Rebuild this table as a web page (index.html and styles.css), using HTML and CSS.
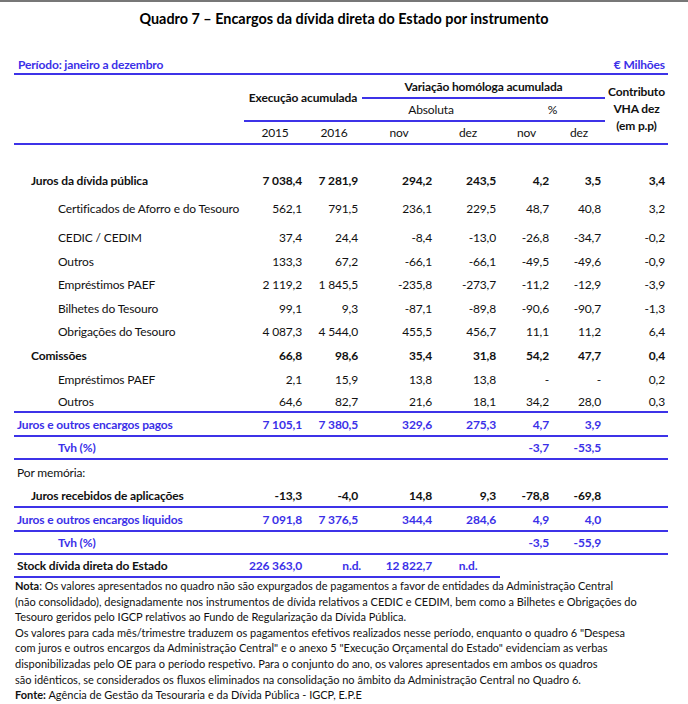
FILE: index.html
```html
<!DOCTYPE html>
<html lang="pt">
<head>
<meta charset="utf-8">
<title>Quadro 7</title>
<link rel="stylesheet" href="styles.css">
</head>
<body>
<div class="page">
  <div class="topline"></div>
  <h1 class="title">Quadro 7 – Encargos da dívida direta do Estado por instrumento</h1>

  <div class="period">
    <span>Período: janeiro a dezembro</span>
    <span>€ Milhões</span>
  </div>

  <div class="thead">
    <div class="h-label"></div>
    <div class="h-exec b">Execução acumulada</div>
    <div class="h-var b">Variação homóloga acumulada</div>
    <div class="h-contrib b">Contributo<br>VHA dez<br>(em p.p)</div>
    <div class="h-abs">Absoluta</div>
    <div class="h-pct">%</div>
    <div class="h-yr">2015</div>
    <div class="h-yr">2016</div>
    <div class="h-yr">nov</div>
    <div class="h-yr">dez</div>
    <div class="h-yr">nov</div>
    <div class="h-yr">dez</div>
  </div>

  <div class="tbody">
    <div class="row r23"></div>

    <div class="row r24 bold">
      <div class="c lbl l1">Juros da dívida pública</div>
      <div class="c n">7 038,4</div><div class="c n">7 281,9</div><div class="c n">294,2</div><div class="c n">243,5</div><div class="c n">4,2</div><div class="c n">3,5</div><div class="c n last">3,4</div>
    </div>
    <div class="row r32">
      <div class="c lbl l2">Certificados de Aforro e do Tesouro</div>
      <div class="c n">562,1</div><div class="c n">791,5</div><div class="c n">236,1</div><div class="c n">229,5</div><div class="c n">48,7</div><div class="c n">40,8</div><div class="c n last">3,2</div>
    </div>
    <div class="row r26">
      <div class="c lbl l2">CEDIC / CEDIM</div>
      <div class="c n">37,4</div><div class="c n">24,4</div><div class="c n">-8,4</div><div class="c n">-13,0</div><div class="c n">-26,8</div><div class="c n">-34,7</div><div class="c n last">-0,2</div>
    </div>
    <div class="row r23">
      <div class="c lbl l2">Outros</div>
      <div class="c n">133,3</div><div class="c n">67,2</div><div class="c n">-66,1</div><div class="c n">-66,1</div><div class="c n">-49,5</div><div class="c n">-49,6</div><div class="c n last">-0,9</div>
    </div>
    <div class="row r23">
      <div class="c lbl l2">Empréstimos PAEF</div>
      <div class="c n">2 119,2</div><div class="c n">1 845,5</div><div class="c n">-235,8</div><div class="c n">-273,7</div><div class="c n">-11,2</div><div class="c n">-12,9</div><div class="c n last">-3,9</div>
    </div>
    <div class="row r24">
      <div class="c lbl l2">Bilhetes do Tesouro</div>
      <div class="c n">99,1</div><div class="c n">9,3</div><div class="c n">-87,1</div><div class="c n">-89,8</div><div class="c n">-90,6</div><div class="c n">-90,7</div><div class="c n last">-1,3</div>
    </div>
    <div class="row r23">
      <div class="c lbl l2">Obrigações do Tesouro</div>
      <div class="c n">4 087,3</div><div class="c n">4 544,0</div><div class="c n">455,5</div><div class="c n">456,7</div><div class="c n">11,1</div><div class="c n">11,2</div><div class="c n last">6,4</div>
    </div>
    <div class="row r24 bold">
      <div class="c lbl l1">Comissões</div>
      <div class="c n">66,8</div><div class="c n">98,6</div><div class="c n">35,4</div><div class="c n">31,8</div><div class="c n">54,2</div><div class="c n">47,7</div><div class="c n last">0,4</div>
    </div>
    <div class="row r24">
      <div class="c lbl l2">Empréstimos PAEF</div>
      <div class="c n">2,1</div><div class="c n">15,9</div><div class="c n">13,8</div><div class="c n">13,8</div><div class="c n">-</div><div class="c n">-</div><div class="c n last">0,2</div>
    </div>
    <div class="row r22 line">
      <div class="c lbl l2">Outros</div>
      <div class="c n">64,6</div><div class="c n">82,7</div><div class="c n">21,6</div><div class="c n">18,1</div><div class="c n">34,2</div><div class="c n">28,0</div><div class="c n last">0,3</div>
    </div>
    <div class="row r24 line bold blue">
      <div class="c lbl l0">Juros e outros encargos pagos</div>
      <div class="c n">7 105,1</div><div class="c n">7 380,5</div><div class="c n">329,6</div><div class="c n">275,3</div><div class="c n">4,7</div><div class="c n">3,9</div><div class="c n last"></div>
    </div>
    <div class="row r23 line bold blue">
      <div class="c lbl l2">Tvh (%)</div>
      <div class="c n"></div><div class="c n"></div><div class="c n"></div><div class="c n"></div><div class="c n">-3,7</div><div class="c n">-53,5</div><div class="c n last"></div>
    </div>
    <div class="row r24">
      <div class="c lbl l0 memo">Por memória:</div>
    </div>
    <div class="row r24 line bold">
      <div class="c lbl l1">Juros recebidos de aplicações</div>
      <div class="c n">-13,3</div><div class="c n">-4,0</div><div class="c n">14,8</div><div class="c n">9,3</div><div class="c n">-78,8</div><div class="c n">-69,8</div><div class="c n last"></div>
    </div>
    <div class="row r24 line bold blue">
      <div class="c lbl l0">Juros e outros encargos líquidos</div>
      <div class="c n">7 091,8</div><div class="c n">7 376,5</div><div class="c n">344,4</div><div class="c n">284,6</div><div class="c n">4,9</div><div class="c n">4,0</div><div class="c n last"></div>
    </div>
    <div class="row r23 line bold blue">
      <div class="c lbl l2">Tvh (%)</div>
      <div class="c n"></div><div class="c n"></div><div class="c n"></div><div class="c n"></div><div class="c n">-3,5</div><div class="c n">-55,9</div><div class="c n last"></div>
    </div>
    <div class="row r23 bold stock">
      <div class="c lbl l0 ul">Stock dívida direta do Estado</div>
      <div class="c n ul blue">226 363,0</div><div class="c n ul blue nd2">n.d.</div><div class="c n ul blue">12 822,7</div><div class="c ul blue nd4">n.d.</div>
    </div>
  </div>

  <div class="notes">
    <p><b>Nota</b>: Os valores apresentados no quadro não são expurgados de pagamentos a favor de entidades da Administração Central<br>(não consolidado), designadamente nos instrumentos de dívida relativos a CEDIC e CEDIM, bem como a Bilhetes e Obrigações do<br>Tesouro geridos pelo IGCP relativos ao Fundo de Regularização da Dívida Pública.</p>
    <p>Os valores para cada mês/trimestre traduzem os pagamentos efetivos realizados nesse período, enquanto o quadro 6 "Despesa<br>com juros e outros encargos da Administração Central" e o anexo 5 "Execução Orçamental do Estado" evidenciam as verbas<br>disponibilizadas pelo OE para o período respetivo. Para o conjunto do ano, os valores apresentados em ambos os quadros<br>são idênticos, se considerados os fluxos eliminados na consolidação no âmbito da Administração Central no Quadro 6.</p>
    <p><b>Fonte:</b> Agência de Gestão da Tesouraria e da Dívida Pública - IGCP, E.P.E</p>
  </div>
</div>
</body>
</html>
```

FILE: styles.css
```css
* { box-sizing: border-box; }

html, body {
  margin: 0;
  padding: 0;
  background: #ffffff;
}

body {
  font-family: "Lato", "Open Sans", "Liberation Sans", sans-serif;
  font-size: 12px;
  letter-spacing: -0.15px;
  color: #111111;
}

.page {
  width: 688px;
  height: 704px;
  overflow: hidden;
}

.topline {
  height: 2px;
  background: #777777;
}

.title {
  margin: 7px 0 0 0;
  font-size: 14.4px;
  line-height: 20px;
  font-weight: 700;
  letter-spacing: 0;
  text-align: center;
  color: #000000;
}

.period {
  margin: 26px 20px 0 14px;
  height: 20px;
  display: flex;
  justify-content: space-between;
  align-items: center;
  padding: 0 3px 0 4px;
  border-bottom: 2px solid #3d33e8;
  color: #3b30e8;
  font-weight: 700;
  width: 654px;
}

.thead,
.row {
  display: grid;
  grid-template-columns: 230px 62px 56px 74px 64px 53px 52px 63px;
  margin-left: 14px;
  width: 654px;
}

.thead {
  grid-template-rows: 24px 23px 23px;
  text-align: center;
}

.thead > div {
  display: flex;
  align-items: center;
  justify-content: center;
  border-bottom: 2px solid #3d33e8;
}

.b { font-weight: 700; }

.h-label { grid-column: 1; grid-row: 1 / 4; }
.h-exec { grid-column: 2 / 4; grid-row: 1 / 3; }
.h-var { grid-column: 4 / 8; grid-row: 1; }
.h-contrib {
  grid-column: 8;
  grid-row: 1 / 4;
  line-height: 17px;
  padding-bottom: 1px;
}
.h-abs { grid-column: 4 / 6; grid-row: 2; }
.h-pct { grid-column: 6 / 8; grid-row: 2; }
.h-yr { grid-row: 3; }

.row .c {
  display: flex;
  align-items: center;
  white-space: nowrap;
}

.row .n {
  justify-content: flex-end;
  padding-right: 4px;
}

.row .n.last { padding-right: 3px; }

.l0 { padding-left: 3px; }
.l1 { padding-left: 17px; }
.l2 { padding-left: 44px; }

.memo { font-weight: 400; }

.bold { font-weight: 700; }
.blue { color: #3b30e8; }
.stock .lbl { color: #111111; }

.line { border-bottom: 2px solid #3d33e8; }
.ul { border-bottom: 2px solid #3d33e8; }

.nd2 { padding-right: 1px !important; }
.nd4 { justify-content: center; }

.r22 { height: 22px; }
.r23 { height: 23px; }
.r24 { height: 24px; }
.r26 { height: 26px; }
.r32 { height: 32px; }

.notes {
  padding-left: 15px;
  font-size: 11px;
  letter-spacing: 0;
  line-height: 15.6px;
  color: #111111;
  white-space: nowrap;
}

.notes p { margin: 0; }
.notes b { font-weight: 700; }
```
